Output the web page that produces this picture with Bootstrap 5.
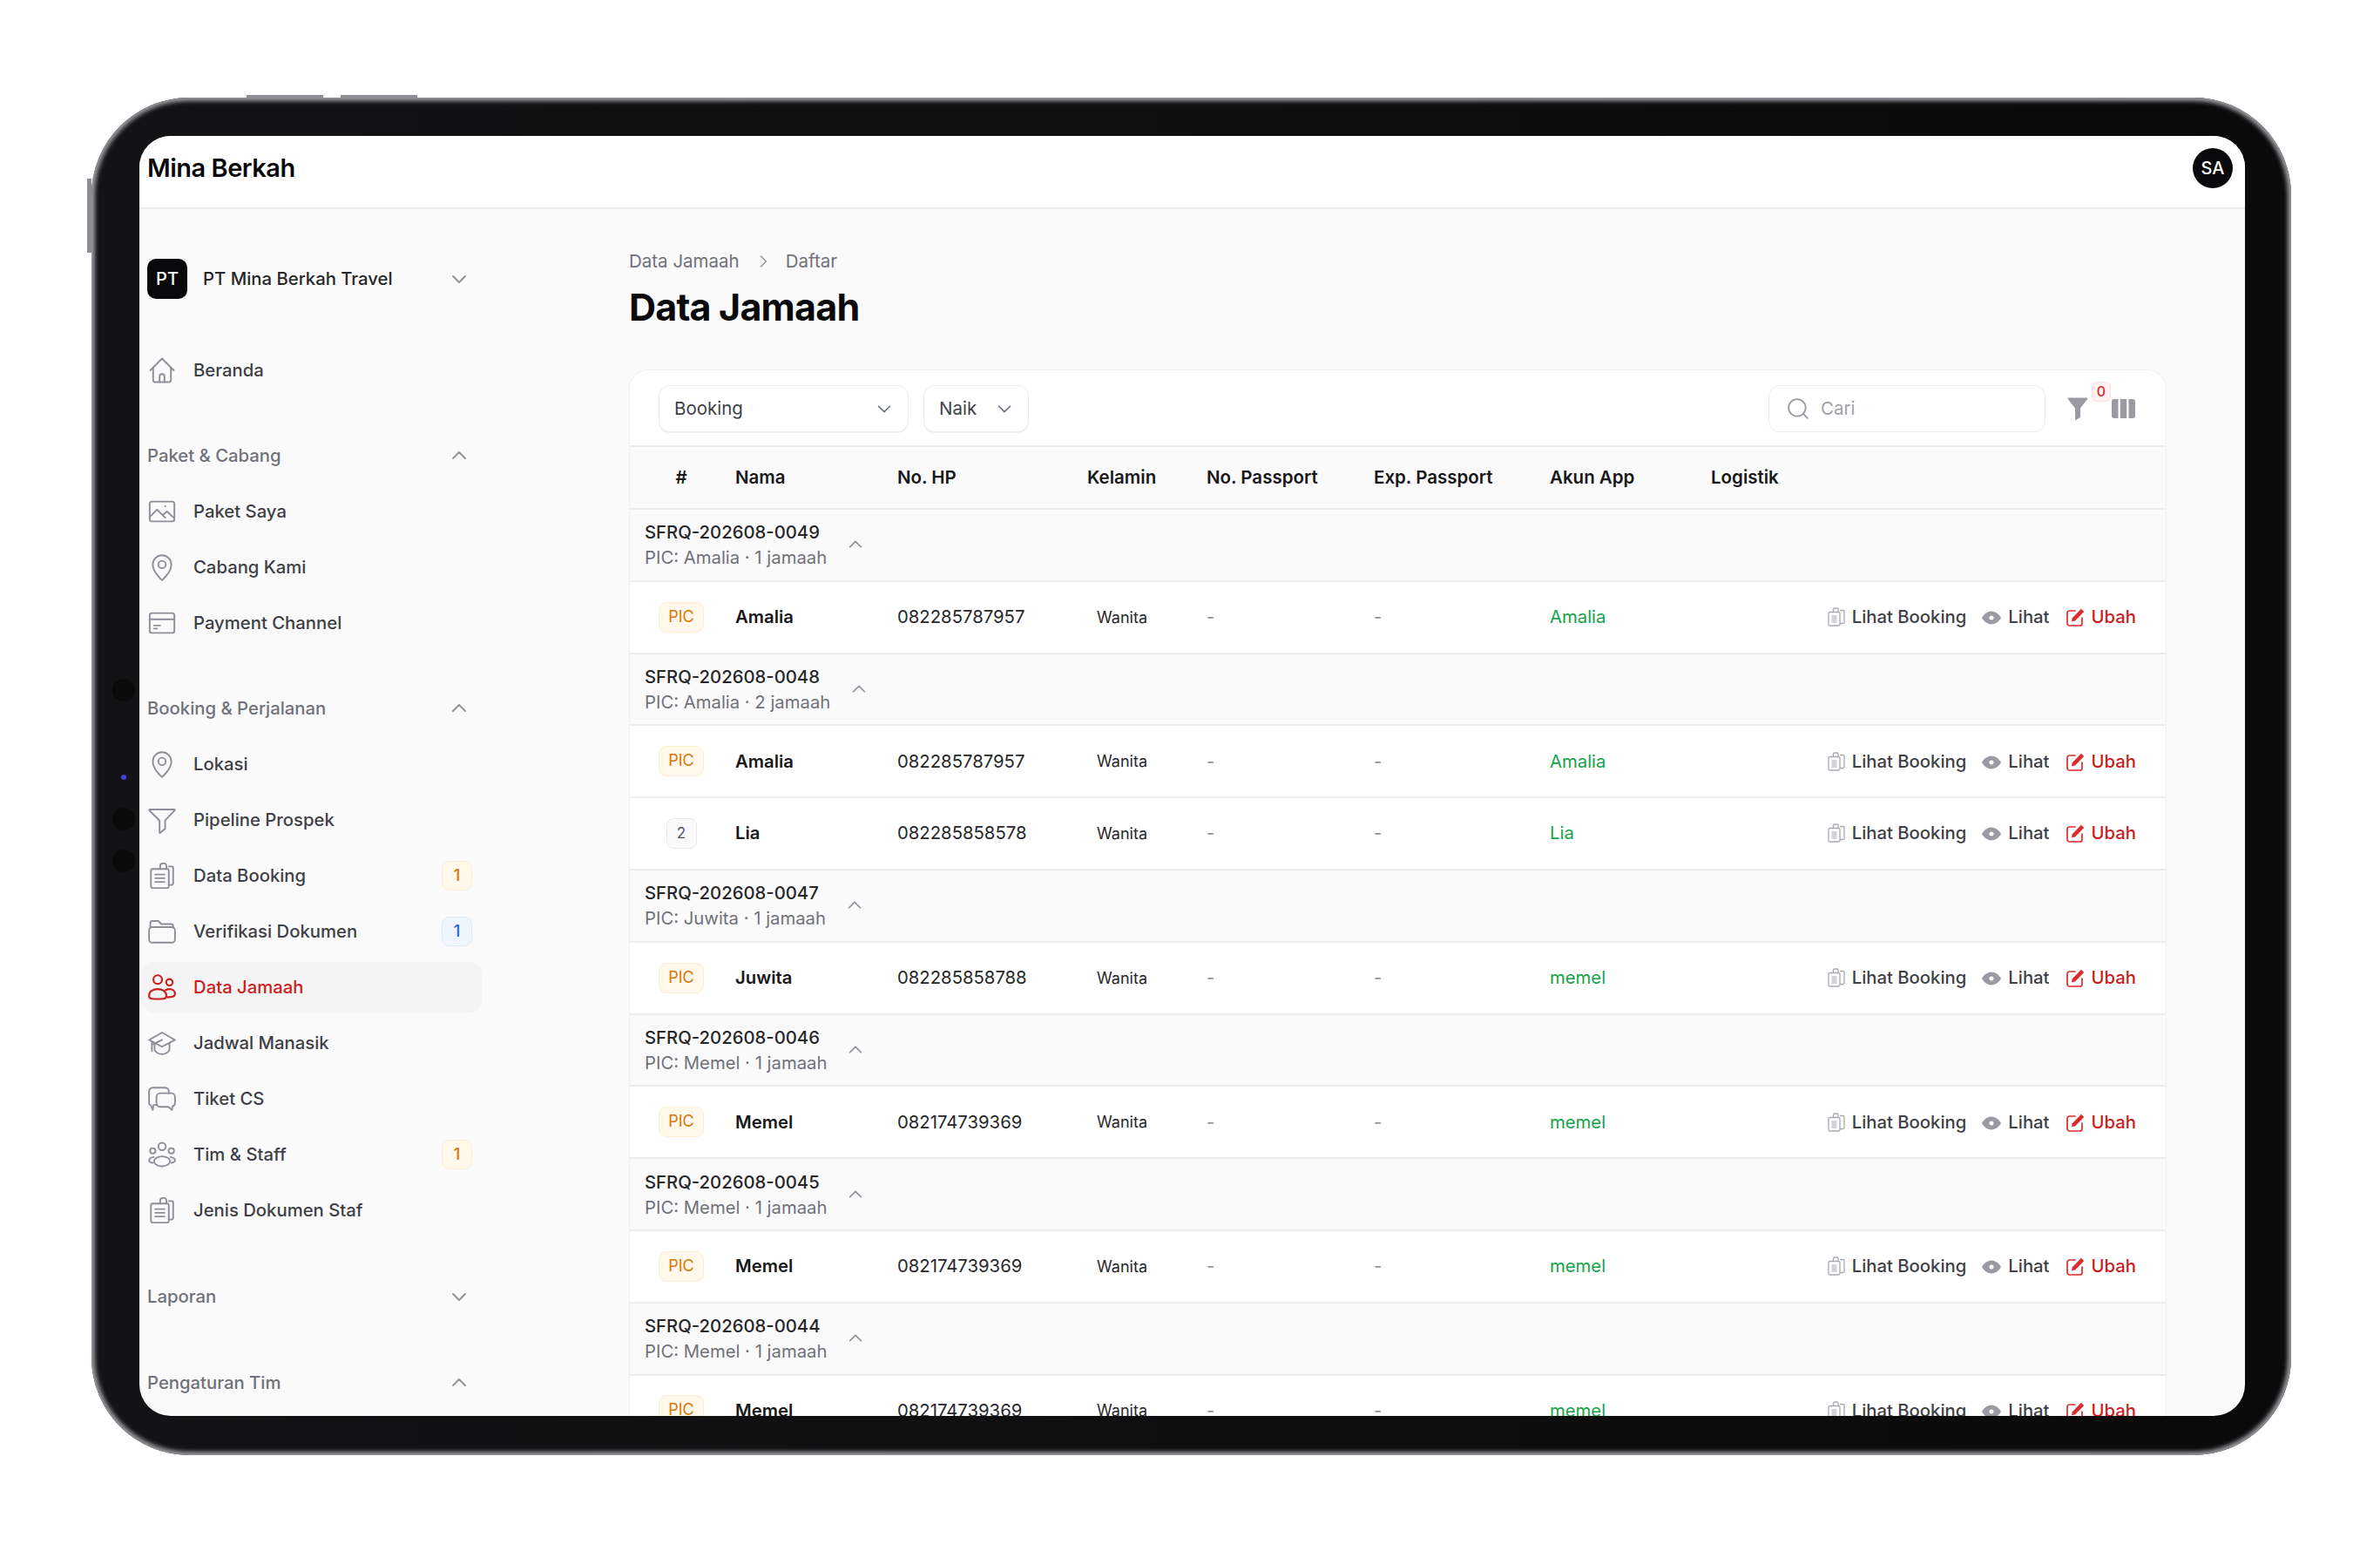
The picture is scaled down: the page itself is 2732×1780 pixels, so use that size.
<!DOCTYPE html>
<html lang="id">
<head>
<meta charset="utf-8">
<title>Data Jamaah</title>
<link href="https://cdn.jsdelivr.net/npm/bootstrap@5.3.0/dist/css/bootstrap.min.css" rel="stylesheet">
<style>
html,body{background:#fff;margin:0;overflow:hidden}
body{font-family:Inter,"Liberation Sans",sans-serif;font-size:20.3px;color:#18181b;width:2732px;height:1780px}
.device{position:relative;width:2525px;height:1558px;margin:112px 0 0 105px;padding:44px 53px 45px 55px;background:linear-gradient(90deg,#131315,#0a0a0b);border-radius:112px;box-shadow:inset 0 0 5px 4px #9b9ba1}
.hw{position:absolute;background:#8d8d93}
.hw-a{left:178px;top:-3px;width:88px;height:4px}
.hw-b{left:286px;top:-3px;width:88px;height:4px}
.hw-c{left:-5px;top:93px;width:5px;height:85px}
.cam{position:absolute;left:24px;width:26px;height:26px;border-radius:50%;background:#0a0a0b}
.cam-1{top:667px}.cam-2{top:815px}.cam-3{top:863px}
.cam-led{position:absolute;left:34px;top:777px;width:6px;height:6px;border-radius:50%;background:#3a46d8}
.screen{width:2417px;height:1469px;background:#fafafa;border-radius:36px;overflow:hidden}
.topbar{height:84px;background:#fff;border-bottom:2px solid #ececee;padding:0 14px 9px 9px}
.brand{font-size:29px;font-weight:600;letter-spacing:-.5px;color:#09090b}
.avatar{width:46px;height:46px;border-radius:50%;background:#09090b;color:#fff;font-size:20px;font-weight:500}
.side{width:562px;flex:none;padding:57px 0 0 3px}
.orgrow{height:46px;margin:0 0 53px 6px;width:378px}
.orglogo{width:46px;height:46px;border-radius:10px;background:#09090b;color:#fff;font-size:20px;font-weight:500}
.orgname{margin-left:18px;font-weight:500;color:#27272a}
.nav-it{height:58px;width:390px;margin-bottom:6px;padding:0 11px 0 6px;border-radius:13px;color:#3f3f46;font-weight:500}
.nav-it svg.ic{width:34px;height:34px;flex:none;color:#8e8e99;margin-right:19px}
.nav-it.on{background:#f4f4f5;color:#c81e1e}
.nav-it.on svg.ic{color:#c81e1e}
.sec-h{height:58px;width:378px;margin:40px 0 6px 6px;color:#71717a;font-weight:500}
.sec-x{margin-top:41px}
.cnt{width:35px;height:34px;border-radius:9px;font-size:19px;font-weight:500;background:#fff8eb;border:1.5px solid #fdeed3;color:#d97706}
.cnt.blue{background:#eff6ff;border-color:#dbeafe;color:#2563eb}
.chev{width:24px;height:24px;color:#8e8e99;flex:none;margin-right:8px}
.main-a{flex:1;padding:0 90px 0 0;min-width:0}
.crumbs{margin-top:46px;height:28px;color:#71717a;font-size:20.5px;font-weight:400}
.crumbs svg{width:16px;height:16px;margin:0 18px 0 19px;color:#8e8e99}
.pg-t{font-size:43px;font-weight:700;letter-spacing:-.8px;color:#09090b;line-height:56px;margin:10px 0 44px}
.tcard{background:#fff;border:1.5px solid #f0f0f2;border-bottom:0;border-radius:22px 22px 0 0;overflow:hidden}
.tools{height:88px;padding:2px 35px 0 33px;border-bottom:2px solid #ececee}
.sel{height:54px;border:1.5px solid #ececee;border-radius:13px;background:#fff;padding:0 16px 0 17px;color:#3f3f46;font-size:20.5px;box-shadow:0 1px 1px #f0f0f2}
.sel-1{width:287px;margin-right:17px}
.sel-2{width:121px}
.sel svg{width:22px;height:22px;color:#6b7280}
.srch{width:318px;height:54px;border:1.5px solid #ececee;border-radius:13px;padding:0 20px;color:#a1a1aa;font-size:20.5px;margin-right:25px}
.srch svg{width:26px;height:26px;color:#9a9aa3;margin-right:13px}
.tb-ic{position:relative;color:#9a9aa3;flex:none}
.tb-ic svg{display:block}
.f-ic{width:24px;height:28px;margin-right:27px}
.c-ic{width:27px;height:22px}
.zero{position:absolute;left:28px;top:-17px;width:22px;height:23px;border-radius:6px;background:#fef2f2;border:1.5px solid #fddede;color:#dc2626;font-size:16px;font-weight:500;line-height:20px;text-align:center}
.jt{table-layout:fixed;width:100%;margin:0;border-collapse:separate;border-spacing:0}
.jt th,.jt td{padding:0;vertical-align:middle;background:transparent;border-bottom:2px solid #ededef;box-shadow:none}
.jt th{height:72px;background:#fafafa;font-weight:600;color:#18181b;font-size:20.5px}
.jt tr.grp td{height:82.8px;background:#fafafa;padding-left:17px;border-bottom:2px solid #ededef}
.jt tr.dat td{height:82.8px;background:#fff;font-size:20.3px}
.gt{font-weight:500;color:#27272a;line-height:29px}
.gs{color:#71717a;font-weight:400;line-height:29px;font-size:20.3px}
.gc{width:22px;height:22px;color:#8e8e99;margin-left:22px}
.num{text-align:center;padding-right:3px!important}
.pic{display:inline-block;width:52px;height:35px;line-height:32px;border-radius:9px;background:#fff8eb;border:1.5px solid #fdeed3;color:#d97706;font-size:18px;font-weight:400;text-align:center}
.two{display:inline-block;width:35px;height:35px;line-height:32px;border-radius:8px;background:#fafafa;border:1.5px solid #e8e8ea;color:#52525b;font-size:17px;text-align:center}
.nm{font-weight:600;color:#18181b}
.ph{font-weight:400;color:#27272a}
.wn{text-align:center;padding-right:57px!important;font-size:18px!important;color:#27272a}
.ds{color:#8e8e99}
.gr{color:#16a34a}
.acts{padding-right:34px!important;color:#3f3f46;font-weight:500;white-space:nowrap}
.acts svg{vertical-align:-4px}
.a-copy{width:20px;height:22px;color:#a8a8b0;margin-right:8px}
.a-eye{width:22px;height:20px;color:#9a9aa3;margin:0 8px 0 18px}
.a-edit{width:21px;height:21px;color:#d92d2d;margin:0 8px 0 19px}
.ub{color:#c81e1e}
</style>
</head>
<body>
<svg width="0" height="0" class="d-none">
<defs>
<symbol id="i-chd" viewBox="0 0 24 24"><path d="M5 9l7 7 7-7" fill="none" stroke="currentColor" stroke-width="1.8" stroke-linecap="round" stroke-linejoin="round"/></symbol>
<symbol id="i-chu" viewBox="0 0 24 24"><path d="M5 15l7-7 7 7" fill="none" stroke="currentColor" stroke-width="1.8" stroke-linecap="round" stroke-linejoin="round"/></symbol>
<symbol id="i-chr" viewBox="0 0 24 24"><path d="M8 3l9 9-9 9" fill="none" stroke="currentColor" stroke-width="2" stroke-linecap="round" stroke-linejoin="round"/></symbol>
<symbol id="i-home" viewBox="0 0 24 24"><g fill="none" stroke="currentColor" stroke-width="1.35" stroke-linecap="round" stroke-linejoin="round"><path d="M2.5 12 12 2.500 21.500 12"/><path d="M4.800 10v10a1.500 1.500 0 0 0 1.500 1.500h11.400a1.500 1.500 0 0 0 1.500-1.500V10"/><path d="M10 21.500v-4.500a2 2 0 0 1 4 0v4.500"/></g></symbol>
<symbol id="i-img" viewBox="0 0 24 24"><g fill="none" stroke="currentColor" stroke-width="1.35" stroke-linecap="round" stroke-linejoin="round"><rect x="2" y="4" width="20" height="16" rx="1.800"/><path d="M2.500 16 8 10.500l6.500 6.500"/><path d="M13 14.500l3-2.500 5.500 5"/></g><circle cx="14.500" cy="7.800" r=".8" fill="currentColor"/></symbol>
<symbol id="i-pin" viewBox="0 0 24 24"><g fill="none" stroke="currentColor" stroke-width="1.35" stroke-linejoin="round"><path d="M12 22.500S4.500 16 4.500 9.800a7.500 7.500 0 0 1 15 0C19.500 16 12 22.500 12 22.500z"/><circle cx="12" cy="9.800" r="3"/></g></symbol>
<symbol id="i-card" viewBox="0 0 24 24"><g fill="none" stroke="currentColor" stroke-width="1.35" stroke-linecap="round" stroke-linejoin="round"><rect x="2" y="4" width="20" height="16" rx="1.800"/><path d="M2 9h20"/><path d="M5.500 14h5M5.500 16.500h2.500"/></g></symbol>
<symbol id="i-fun" viewBox="0 0 24 24"><path d="M2 3.500h20a.4.4 0 0 1 .3.700L14.500 12.500v6.800l-4.200 3.200a.2.2 0 0 1-.3-.2v-9.800L1.700 4.200A.4.4 0 0 1 2 3.500z" fill="none" stroke="currentColor" stroke-width="1.35" stroke-linejoin="round"/></symbol>
<symbol id="i-clip" viewBox="0 0 24 24"><g fill="none" stroke="currentColor" stroke-width="1.35" stroke-linecap="round" stroke-linejoin="round"><rect x="3" y="6.500" width="14.500" height="15.500" rx="1.500"/><path d="M17.500 4.500h2.500a1 1 0 0 1 1 1v12.500a1.500 1.500 0 0 1-1.500 1.500h-2"/><path d="M10.500 6.500V4a2 2 0 0 1 2-2h1a2 2 0 0 1 2 2v2.500"/><path d="M6.500 11h7.500M6.500 14h7.500M6.500 17h7.500"/></g></symbol>
<symbol id="i-fold" viewBox="0 0 24 24"><g fill="none" stroke="currentColor" stroke-width="1.35" stroke-linecap="round" stroke-linejoin="round"><rect x="1.500" y="8.500" width="21" height="12.500" rx="2.500"/><path d="M2.500 9V5a1.500 1.500 0 0 1 1.500-1.500h5L11.500 6h8a1.500 1.500 0 0 1 1.500 1.500V9"/></g></symbol>
<symbol id="i-usr" viewBox="0 0 24 24"><g fill="none" stroke="currentColor" stroke-width="1.5" stroke-linecap="round" stroke-linejoin="round"><circle cx="8.500" cy="5.800" r="3.500"/><circle cx="18" cy="8" r="2.600"/><path d="M1.500 18.800c0-3.200 3-5.300 7-5.300s7 2.100 7 5.300-3 2.700-7 2.700-7 .5-7-2.700z"/><path d="M15 14.300c.9-.5 1.900-.8 3-.8 2.600 0 4.500 1.600 4.500 3.800 0 2-1.900 2.700-4.500 2.700h-1.600"/></g></symbol>
<symbol id="i-cap" viewBox="0 0 24 24"><g fill="none" stroke="currentColor" stroke-width="1.35" stroke-linecap="round" stroke-linejoin="round"><path d="M12 3.500 22.500 9.500 12 15 1.500 9.500z"/><path d="M6 12v6c1.500 1.800 3.700 3 6 3s4.500-1.200 6-3v-6"/><path d="M3.800 11v7.500"/><path d="M12 9.500 5 13"/></g></symbol>
<symbol id="i-chat" viewBox="0 0 24 24"><g fill="none" stroke="currentColor" stroke-width="1.35" stroke-linecap="round" stroke-linejoin="round"><path d="M8 17H5l-.5 4L3 17.500A2.500 2.500 0 0 1 1.500 15V6A3 3 0 0 1 4.500 3h10a3 3 0 0 1 3 3v1.500"/><path d="M10.500 7.500h9a3 3 0 0 1 3 3v5a2.800 2.800 0 0 1-2 2.700L20 21l-3-2.500h-6.500a3 3 0 0 1-3-3v-5a3 3 0 0 1 3-3z"/></g></symbol>
<symbol id="i-team" viewBox="0 0 24 24"><g fill="none" stroke="currentColor" stroke-width="1.35" stroke-linecap="round" stroke-linejoin="round"><circle cx="12" cy="5.500" r="3"/><circle cx="4.500" cy="9" r="2.200"/><circle cx="19.500" cy="9" r="2.200"/><ellipse cx="12" cy="17.500" rx="6.500" ry="4"/><path d="M5.200 14c-2 .3-3.700 1.400-3.700 2.700 0 1 1.200 1.800 3 2"/><path d="M18.800 14c2 .3 3.700 1.400 3.700 2.700 0 1-1.200 1.800-3 2"/></g></symbol>
<symbol id="i-srch" viewBox="0 0 24 24"><g fill="none" stroke="currentColor" stroke-width="1.700" stroke-linecap="round"><circle cx="11" cy="11" r="9"/><path d="M17.500 17.500l4.500 4.500"/></g></symbol>
<symbol id="i-ffun" viewBox="0 0 24 28"><path d="M1.500 1.500h21c.8 0 1.200.9.700 1.500L15 13.500V24l-5 3c-.5.200-1 0-1-.6V13.500L.8 3C.3 2.400.7 1.500 1.500 1.500z" fill="currentColor"/></symbol>
<symbol id="i-cols" viewBox="0 0 27 22"><path d="M3 0h4.500v22H3a3 3 0 0 1-3-3V3a3 3 0 0 1 3-3zM9.800 0h7.400v22H9.800zM19.500 0H24a3 3 0 0 1 3 3v16a3 3 0 0 1-3 3h-4.500z" fill="currentColor"/></symbol>
<symbol id="i-copy" viewBox="0 0 20 22"><g fill="none" stroke="currentColor" stroke-width="1.300" stroke-linejoin="round"><rect x="1" y="5.500" width="13" height="15.500" rx="1.500"/><path d="M6.500 5.500V2.500A1.500 1.500 0 0 1 8 1h2.500a1.500 1.500 0 0 1 1.500 1.500v3M14 3.500h3.500A1.500 1.500 0 0 1 19 5v12a1.500 1.500 0 0 1-1.500 1.500H14"/></g><path d="M4.500 9h6v9h-6z" fill="currentColor" opacity=".5"/></symbol>
<symbol id="i-eye" viewBox="0 0 22 20"><path fill-rule="evenodd" d="M11 2.500c5 0 9 3.800 11 7.500-2 3.700-6 7.500-11 7.500S2 13.700 0 10c2-3.700 6-7.500 11-7.500zm0 5a2.500 2.500 0 1 0 0 5 2.500 2.500 0 0 0 0-5z" fill="currentColor"/></symbol>
<symbol id="i-edit" viewBox="0 0 21 21"><path d="M10 3H3.500A2.500 2.500 0 0 0 1 5.500v12A2.500 2.500 0 0 0 3.500 20h12a2.500 2.500 0 0 0 2.500-2.500V11" fill="none" stroke="currentColor" stroke-width="1.700" stroke-linecap="round"/><path d="M17 .8l3.200 3.200L10 14.500l-4 .8.800-4z" fill="currentColor"/></symbol>
</defs>
</svg>

<div class="device">
  <span class="hw hw-a"></span><span class="hw hw-b"></span><span class="hw hw-c"></span>
  <span class="cam cam-1"></span><span class="cam-led"></span><span class="cam cam-2"></span><span class="cam cam-3"></span>
  <div class="screen d-flex flex-column">
    <header class="topbar d-flex align-items-center justify-content-between flex-shrink-0">
      <div class="brand">Mina Berkah</div>
      <div class="avatar d-flex align-items-center justify-content-center">SA</div>
    </header>
    <div class="d-flex flex-grow-1 overflow-hidden">
      <aside class="side">
        <div class="orgrow d-flex align-items-center">
          <div class="orglogo d-flex align-items-center justify-content-center">PT</div>
          <div class="orgname flex-grow-1">PT Mina Berkah Travel</div>
          <svg class="chev"><use href="#i-chd"/></svg>
        </div>
        <div class="nav-it d-flex align-items-center"><svg class="ic"><use href="#i-home"/></svg>Beranda</div>

        <div class="sec-h d-flex align-items-center justify-content-between">Paket &amp; Cabang<svg class="chev"><use href="#i-chu"/></svg></div>
        <div class="nav-it d-flex align-items-center"><svg class="ic"><use href="#i-img"/></svg>Paket Saya</div>
        <div class="nav-it d-flex align-items-center"><svg class="ic"><use href="#i-pin"/></svg>Cabang Kami</div>
        <div class="nav-it d-flex align-items-center"><svg class="ic"><use href="#i-card"/></svg>Payment Channel</div>

        <div class="sec-h d-flex align-items-center justify-content-between">Booking &amp; Perjalanan<svg class="chev"><use href="#i-chu"/></svg></div>
        <div class="nav-it d-flex align-items-center"><svg class="ic"><use href="#i-pin"/></svg>Lokasi</div>
        <div class="nav-it d-flex align-items-center"><svg class="ic"><use href="#i-fun"/></svg>Pipeline Prospek</div>
        <div class="nav-it d-flex align-items-center"><svg class="ic"><use href="#i-clip"/></svg><span class="flex-grow-1">Data Booking</span><span class="cnt d-flex align-items-center justify-content-center">1</span></div>
        <div class="nav-it d-flex align-items-center"><svg class="ic"><use href="#i-fold"/></svg><span class="flex-grow-1">Verifikasi Dokumen</span><span class="cnt blue d-flex align-items-center justify-content-center">1</span></div>
        <div class="nav-it on d-flex align-items-center"><svg class="ic"><use href="#i-usr"/></svg>Data Jamaah</div>
        <div class="nav-it d-flex align-items-center"><svg class="ic"><use href="#i-cap"/></svg>Jadwal Manasik</div>
        <div class="nav-it d-flex align-items-center"><svg class="ic"><use href="#i-chat"/></svg>Tiket CS</div>
        <div class="nav-it d-flex align-items-center"><svg class="ic"><use href="#i-team"/></svg><span class="flex-grow-1">Tim &amp; Staff</span><span class="cnt d-flex align-items-center justify-content-center">1</span></div>
        <div class="nav-it d-flex align-items-center"><svg class="ic"><use href="#i-clip"/></svg>Jenis Dokumen Staf</div>

        <div class="sec-h sec-x d-flex align-items-center justify-content-between">Laporan<svg class="chev"><use href="#i-chd"/></svg></div>
        <div class="sec-h sec-x d-flex align-items-center justify-content-between">Pengaturan Tim<svg class="chev"><use href="#i-chu"/></svg></div>
      </aside>

      <main class="main-a">
        <div class="crumbs d-flex align-items-center">Data Jamaah<svg><use href="#i-chr"/></svg>Daftar</div>
        <h1 class="pg-t">Data Jamaah</h1>
        <div class="tcard">
          <div class="tools d-flex align-items-center">
            <div class="sel sel-1 d-flex align-items-center justify-content-between">Booking<svg><use href="#i-chd"/></svg></div>
            <div class="sel sel-2 d-flex align-items-center justify-content-between">Naik<svg><use href="#i-chd"/></svg></div>
            <div class="srch ms-auto d-flex align-items-center"><svg><use href="#i-srch"/></svg>Cari</div>
            <div class="tb-ic f-ic"><svg width="24" height="28"><use href="#i-ffun"/></svg><span class="zero">0</span></div>
            <div class="tb-ic c-ic"><svg width="27" height="22"><use href="#i-cols"/></svg></div>
          </div>
          <table class="table jt">
            <colgroup><col style="width:121px"><col style="width:186px"><col style="width:218px"><col style="width:137px"><col style="width:192px"><col style="width:202px"><col style="width:185px"><col style="width:130px"><col></colgroup>
            <thead><tr><th class="num">#</th><th>Nama</th><th>No. HP</th><th>Kelamin</th><th>No. Passport</th><th>Exp. Passport</th><th>Akun App</th><th>Logistik</th><th></th></tr></thead>
            <tbody>
              <tr class="grp"><td colspan="9"><div class="d-inline-flex align-items-center"><div><div class="gt">SFRQ-202608-0049</div><div class="gs">PIC: Amalia · 1 jamaah</div></div><svg class="gc"><use href="#i-chu"/></svg></div></td></tr>
              <tr class="dat"><td class="num"><span class="pic">PIC</span></td><td class="nm">Amalia</td><td class="ph">082285787957</td><td class="wn">Wanita</td><td class="ds">-</td><td class="ds">-</td><td class="gr">Amalia</td><td></td><td class="acts text-end"><svg class="a-copy"><use href="#i-copy"/></svg>Lihat Booking<svg class="a-eye"><use href="#i-eye"/></svg>Lihat<svg class="a-edit"><use href="#i-edit"/></svg><span class="ub">Ubah</span></td></tr>

              <tr class="grp"><td colspan="9"><div class="d-inline-flex align-items-center"><div><div class="gt">SFRQ-202608-0048</div><div class="gs">PIC: Amalia · 2 jamaah</div></div><svg class="gc"><use href="#i-chu"/></svg></div></td></tr>
              <tr class="dat"><td class="num"><span class="pic">PIC</span></td><td class="nm">Amalia</td><td class="ph">082285787957</td><td class="wn">Wanita</td><td class="ds">-</td><td class="ds">-</td><td class="gr">Amalia</td><td></td><td class="acts text-end"><svg class="a-copy"><use href="#i-copy"/></svg>Lihat Booking<svg class="a-eye"><use href="#i-eye"/></svg>Lihat<svg class="a-edit"><use href="#i-edit"/></svg><span class="ub">Ubah</span></td></tr>
              <tr class="dat"><td class="num"><span class="two">2</span></td><td class="nm">Lia</td><td class="ph">082285858578</td><td class="wn">Wanita</td><td class="ds">-</td><td class="ds">-</td><td class="gr">Lia</td><td></td><td class="acts text-end"><svg class="a-copy"><use href="#i-copy"/></svg>Lihat Booking<svg class="a-eye"><use href="#i-eye"/></svg>Lihat<svg class="a-edit"><use href="#i-edit"/></svg><span class="ub">Ubah</span></td></tr>

              <tr class="grp"><td colspan="9"><div class="d-inline-flex align-items-center"><div><div class="gt">SFRQ-202608-0047</div><div class="gs">PIC: Juwita · 1 jamaah</div></div><svg class="gc"><use href="#i-chu"/></svg></div></td></tr>
              <tr class="dat"><td class="num"><span class="pic">PIC</span></td><td class="nm">Juwita</td><td class="ph">082285858788</td><td class="wn">Wanita</td><td class="ds">-</td><td class="ds">-</td><td class="gr">memel</td><td></td><td class="acts text-end"><svg class="a-copy"><use href="#i-copy"/></svg>Lihat Booking<svg class="a-eye"><use href="#i-eye"/></svg>Lihat<svg class="a-edit"><use href="#i-edit"/></svg><span class="ub">Ubah</span></td></tr>

              <tr class="grp"><td colspan="9"><div class="d-inline-flex align-items-center"><div><div class="gt">SFRQ-202608-0046</div><div class="gs">PIC: Memel · 1 jamaah</div></div><svg class="gc"><use href="#i-chu"/></svg></div></td></tr>
              <tr class="dat"><td class="num"><span class="pic">PIC</span></td><td class="nm">Memel</td><td class="ph">082174739369</td><td class="wn">Wanita</td><td class="ds">-</td><td class="ds">-</td><td class="gr">memel</td><td></td><td class="acts text-end"><svg class="a-copy"><use href="#i-copy"/></svg>Lihat Booking<svg class="a-eye"><use href="#i-eye"/></svg>Lihat<svg class="a-edit"><use href="#i-edit"/></svg><span class="ub">Ubah</span></td></tr>

              <tr class="grp"><td colspan="9"><div class="d-inline-flex align-items-center"><div><div class="gt">SFRQ-202608-0045</div><div class="gs">PIC: Memel · 1 jamaah</div></div><svg class="gc"><use href="#i-chu"/></svg></div></td></tr>
              <tr class="dat"><td class="num"><span class="pic">PIC</span></td><td class="nm">Memel</td><td class="ph">082174739369</td><td class="wn">Wanita</td><td class="ds">-</td><td class="ds">-</td><td class="gr">memel</td><td></td><td class="acts text-end"><svg class="a-copy"><use href="#i-copy"/></svg>Lihat Booking<svg class="a-eye"><use href="#i-eye"/></svg>Lihat<svg class="a-edit"><use href="#i-edit"/></svg><span class="ub">Ubah</span></td></tr>

              <tr class="grp"><td colspan="9"><div class="d-inline-flex align-items-center"><div><div class="gt">SFRQ-202608-0044</div><div class="gs">PIC: Memel · 1 jamaah</div></div><svg class="gc"><use href="#i-chu"/></svg></div></td></tr>
              <tr class="dat"><td class="num"><span class="pic">PIC</span></td><td class="nm">Memel</td><td class="ph">082174739369</td><td class="wn">Wanita</td><td class="ds">-</td><td class="ds">-</td><td class="gr">memel</td><td></td><td class="acts text-end"><svg class="a-copy"><use href="#i-copy"/></svg>Lihat Booking<svg class="a-eye"><use href="#i-eye"/></svg>Lihat<svg class="a-edit"><use href="#i-edit"/></svg><span class="ub">Ubah</span></td></tr>
            </tbody>
          </table>
        </div>
      </main>
    </div>
  </div>
</div>
<script src="https://cdn.jsdelivr.net/npm/bootstrap@5.3.0/dist/js/bootstrap.bundle.min.js"></script>
</body>
</html>
